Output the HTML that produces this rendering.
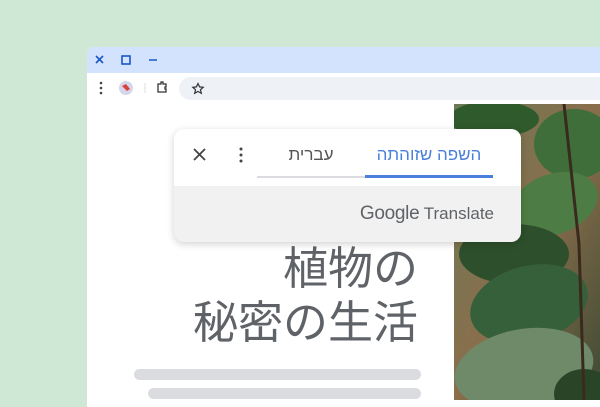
<!DOCTYPE html>
<html><head><meta charset="utf-8"><style>
*{margin:0;padding:0;box-sizing:border-box}
body{width:600px;height:400px;overflow:hidden;background:#cfe8d6;position:relative;font-family:"Liberation Sans","Noto Sans CJK JP",sans-serif}
.win{position:absolute;left:87px;top:47px;width:520px;height:360px;background:#fff;border-radius:8px 0 0 0;overflow:hidden}
.title{position:absolute;left:0;top:0;width:100%;height:26px;background:#d3e3fd}
.tool{position:absolute;left:0;top:26px;width:100%;height:31px;background:#fff}
.omni{position:absolute;left:92px;top:4px;width:440px;height:23px;background:#eef1f6;border-radius:12px}
.photo{position:absolute;left:454px;top:104px;width:146px;height:296px}
.jp{position:absolute;right:182px;color:#5f6368;font-family:"Noto Sans CJK JP",sans-serif;font-weight:400;font-size:45px;line-height:1;white-space:nowrap}
.bar{position:absolute;height:11px;background:#dadce0;border-radius:6px}
.pop{position:absolute;left:174px;top:129px;width:347px;height:113px;background:#f1f1f1;border-radius:10px;overflow:hidden;box-shadow:0 2px 8px rgba(0,0,0,.18)}
.pop .top{position:absolute;left:0;top:0;width:100%;height:57px;background:#fff}
</style></head><body>
<div class="win">
 <div class="title">
  <svg width="120" height="26" style="position:absolute;left:0;top:0">
   <path d="M9 9l7 7M16 9l-7 7" stroke="#1a57c9" stroke-width="1.6"/>
   <rect x="35" y="9" width="8" height="8" fill="none" stroke="#1a57c9" stroke-width="1.6"/>
   <path d="M62 13h8" stroke="#1a57c9" stroke-width="1.6"/>
  </svg>
 </div>
 <div class="tool">
  <svg width="90" height="31" style="position:absolute;left:0;top:0">
   <circle cx="14" cy="10" r="1.3" fill="#444"/><circle cx="14" cy="15" r="1.3" fill="#444"/><circle cx="14" cy="20" r="1.3" fill="#444"/>
   <circle cx="39" cy="15" r="7" fill="#d6d6ea"/><path d="M35 13l4-2 4 5-3 2z" fill="#d9443a"/>
   <path d="M58 10v10" stroke="#ddd"/>
   <path d="M71 11h3v-2h2v2h3v3h-1v2h1v3h-8z" fill="none" stroke="#333" stroke-width="1.3"/>
  </svg>
  <div class="omni"><svg width="22" height="22" style="position:absolute;left:8px;top:0"><path d="M8 5.5l1.6 3.4 3.6.4-2.7 2.4.8 3.6L8 13.4l-3.3 1.9.8-3.6-2.7-2.4 3.6-.4z" fill="none" stroke="#333" stroke-width="1.2" transform="translate(3 1)"/></svg></div>
 </div>
</div>
<svg class="photo" viewBox="0 0 146 296">
 <defs><linearGradient id="bg" x1="0" y1="0" x2="1" y2="1"><stop offset="0" stop-color="#6b7a55"/><stop offset=".5" stop-color="#8a6e4c"/><stop offset="1" stop-color="#3d4a33"/></linearGradient></defs>
 <rect width="146" height="296" fill="url(#bg)"/>
 <ellipse cx="40" cy="15" rx="45" ry="18" fill="#2f5a2c"/>
 <ellipse cx="120" cy="40" rx="40" ry="35" fill="#3f6e3a"/>
 <ellipse cx="100" cy="100" rx="45" ry="30" fill="#4d7d45" transform="rotate(-20 100 100)"/>
 <ellipse cx="60" cy="150" rx="55" ry="30" fill="#2d4f2b"/>
 <ellipse cx="75" cy="200" rx="60" ry="38" fill="#35603a" transform="rotate(-15 75 200)"/>
 <ellipse cx="70" cy="265" rx="70" ry="40" fill="#6f8a68" transform="rotate(-10 70 265)"/>
 <ellipse cx="130" cy="290" rx="30" ry="25" fill="#2a4428"/>
 <path d="M110 0 L125 140 L130 296" stroke="#3a2a1e" stroke-width="3" fill="none"/>
</svg>
<div class="jp" style="top:242px">植物の</div>
<div class="jp" style="top:296px">秘密の生活</div>
<div class="bar" style="left:134px;top:369px;width:287px"></div>
<div class="bar" style="left:148px;top:388px;width:273px"></div>
<div class="pop">
 <div class="top">
  <svg width="100" height="57" style="position:absolute;left:0;top:0">
   <path d="M20 20l11 11M31 20l-11 11" stroke="#444" stroke-width="1.8"/>
   <circle cx="67" cy="20" r="1.5" fill="#444"/><circle cx="67" cy="26" r="1.5" fill="#444"/><circle cx="67" cy="32" r="1.5" fill="#444"/>
  </svg>
  <div style="position:absolute;left:83px;top:47px;width:108px;height:2px;background:#dadce0"></div>
  <div style="position:absolute;left:191px;top:46px;width:128px;height:3px;background:#4a7fdc"></div>
  <div dir="rtl" style="position:absolute;left:83px;width:108px;top:16px;text-align:center;font-size:17px;color:#555">עברית</div>
  <div dir="rtl" style="position:absolute;left:191px;width:128px;top:16px;text-align:center;font-size:17px;color:#4a7fdc">השפה שזוהתה</div>
 </div>
 <div style="position:absolute;right:27px;top:74px;font-size:17px;color:#5f6368;white-space:nowrap"><span style="font-size:19px;letter-spacing:-0.3px">Google</span> Translate</div>
</div>
</body></html>
